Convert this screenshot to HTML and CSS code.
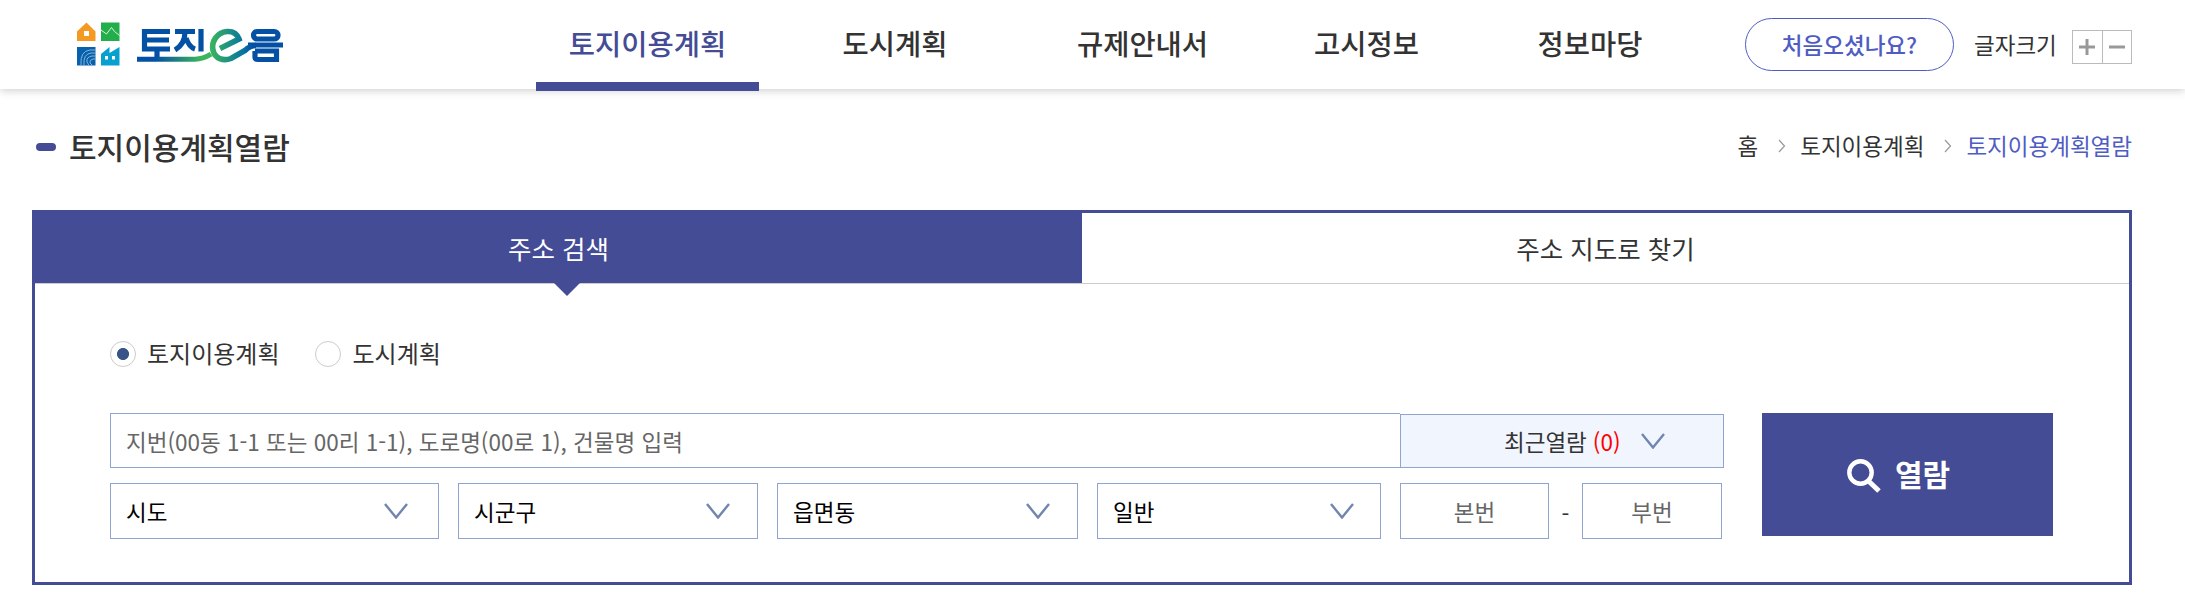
FILE: index.html
```html
<!DOCTYPE html>
<html lang="ko">
<head>
<meta charset="utf-8">
<title>토지이음</title>
<link rel="stylesheet" href="styles.css">
</head>
<body>
<header class="header">
  <a class="logo" aria-label="토지이음">
    <svg width="206" height="46" viewBox="77 21 206 46">
      <defs>
        <linearGradient id="g1" gradientUnits="userSpaceOnUse" x1="155" y1="0" x2="212" y2="0"><stop offset="0" stop-color="#0450a4"/><stop offset=".8" stop-color="#3cb55c"/><stop offset="1" stop-color="#3cb55c"/></linearGradient>
        <linearGradient id="g2" gradientUnits="userSpaceOnUse" x1="210" y1="0" x2="252" y2="0"><stop offset="0" stop-color="#3cb55c"/><stop offset=".8" stop-color="#0675a0"/><stop offset="1" stop-color="#0450a4"/></linearGradient>
      </defs>
      <path fill="#f49a22" fill-rule="evenodd" d="M77 31.500 86.500 22.500 95.500 31.500V41H77ZM84 31v5h5v-5Z"/>
      <path fill="#22ae4b" d="M101 22.500h18.500V41H101Z"/>
      <path fill="none" stroke="#d9f2dc" stroke-width="1" d="m101 30 5.500 4 5-6.500 3 4 5 4"/>
      <path fill="#0862ab" d="M77 47h18.500v18.500H77Z"/>
      <path fill="none" stroke="#8fbde0" stroke-width=".9" d="M95.500 50H90q-10 1-9 15M95.500 53H91q-8 1-7 12M95.500 56H92q-6 1-5 6l2 3.500M95.500 59H93q-4 1-3 4l2 2"/>
      <path fill="#08a0cf" fill-rule="evenodd" d="M101 65.500V54l8.500-7v6l10-6v18.500ZM105 56v3.500h3V56ZM112 56v3.500h3V56Z"/>
      <g fill="none" stroke="#0450a4" stroke-width="5.200">
        <path d="M170 31.500H144.500V49H170M145 40h24M157 49v10"/>
        <path d="M175 31.500h20M185 32q0 12-10 18M186 38q3 9 9 11M201 29v22.500"/>
        <rect x="253.500" y="31.500" width="24.500" height="7.500" rx="3.700"/>
        <path d="M248 45h35M255 51h24M255 51v6q0 2.500 3 2.500h18.500V49"/>
      </g>
      <path fill="none" stroke="url(#g1)" stroke-width="5" d="M137 59.200h58q8 0 16-5"/>
      <path fill="none" stroke="url(#g2)" stroke-width="5.600" d="m220 48.500 19-9.500q-3-8-12-7.500c-10 1-16 10-14 19 2 8 10 11 18 8l14-8q5-5 11-5"/>
    </svg>
  </a>
  <nav class="nav">
    <a class="nav-item active">토지이용계획</a>
    <a class="nav-item">도시계획</a>
    <a class="nav-item">규제안내서</a>
    <a class="nav-item">고시정보</a>
    <a class="nav-item">정보마당</a>
  </nav>
  <div class="utils">
    <a class="guide">처음오셨나요?</a>
    <span class="size-label">글자크기</span>
    <div class="size-box">
      <button class="size-btn" aria-label="확대"><svg width="16" height="16"><path d="M0 8h16M8 0v16" stroke="#999" stroke-width="3"/></svg></button>
      <button class="size-btn" aria-label="축소"><svg width="16" height="16"><path d="M0 8h16" stroke="#999" stroke-width="3"/></svg></button>
    </div>
  </div>
</header>

<div class="title-row">
  <h1 class="title">토지이용계획열람</h1>
  <div class="crumbs">
    <span>홈</span>
    <svg class="sep" width="8" height="14"><path d="m1 1 5.500 6L1 13" fill="none" stroke="#999" stroke-width="1.200"/></svg>
    <span>토지이용계획</span>
    <svg class="sep" width="8" height="14"><path d="m1 1 5.500 6L1 13" fill="none" stroke="#999" stroke-width="1.200"/></svg>
    <span class="here">토지이용계획열람</span>
  </div>
</div>

<main class="panel">
  <div class="tabs">
    <a class="tab on">주소 검색</a>
    <a class="tab">주소 지도로 찾기</a>
  </div>
  <div class="body">
    <div class="radios">
      <label class="radio checked"><i class="dot"></i><span>토지이용계획</span></label>
      <label class="radio"><i class="dot"></i><span>도시계획</span></label>
    </div>
    <div class="form">
      <div class="fields">
        <div class="line">
          <div class="field keyword">지번(00동 1-1 또는 00리 1-1), 도로명(00로 1), 건물명 입력</div>
          <div class="recent">최근열람 <span class="count">(0)</span><svg class="chev" width="24" height="16"><path d="m1 1 11 13.500L23 1"/></svg></div>
        </div>
        <div class="line selects">
          <div class="field select">시도<svg class="chev" width="24" height="16"><path d="m1 1 11 13.500L23 1"/></svg></div>
          <div class="field select">시군구<svg class="chev" width="24" height="16"><path d="m1 1 11 13.500L23 1"/></svg></div>
          <div class="field select">읍면동<svg class="chev" width="24" height="16"><path d="m1 1 11 13.500L23 1"/></svg></div>
          <div class="field select">일반<svg class="chev" width="24" height="16"><path d="m1 1 11 13.500L23 1"/></svg></div>
          <div class="field num">본번</div>
          <span class="dash">-</span>
          <div class="field num">부번</div>
        </div>
      </div>
      <button class="submit"><svg width="34" height="34" fill="none" stroke="#fff"><circle cx="13.500" cy="13.500" r="11.200" stroke-width="4.400"/><path d="m21.500 22 10.500 10" stroke-width="5"/></svg><span>열람</span></button>
    </div>
  </div>
</main>
</body>
</html>
```
FILE: styles.css
```css
* { box-sizing: border-box; }
body {
  margin: 0;
  height: 615px;
  overflow: hidden;
  background: #fff;
  color: #333;
  font-family: "Noto Sans CJK KR", sans-serif;
  font-size: 22.5px;
  line-height: 1;
}
svg { display: block; flex: none; }
button { margin: 0; padding: 0; border: 0; font: inherit; }

.header {
  display: flex;
  height: 89px;
  padding: 0 53px 0 77px;
  box-shadow: 0 1px 9px rgba(0, 0, 0, .22);
}
.logo { padding-top: 21px; width: 459px; }
.nav { display: flex; height: 91px; font-size: 28.5px; font-weight: 500; }
.nav-item { width: 223px; padding-top: 29px; text-align: center; white-space: nowrap; }
.nav-item:nth-child(2) { width: 272px; }
.nav-item:nth-child(3) { width: 223px; }
.nav-item:nth-child(4) { width: 225px; }
.nav-item:nth-child(5) { width: 222px; }
.nav-item.active { color: #434c94; border-bottom: 9px solid #434c94; }
.utils { display: flex; margin-left: auto; }
.guide {
  width: 209px;
  height: 53px;
  margin: 18px 20px 0 0;
  padding-top: 14px;
  border: 1px solid #4f5cc4;
  border-radius: 27px;
  color: #4f5cc4;
  font-weight: 500;
  text-align: center;
}
.size-label { width: 83px; padding-top: 33px; white-space: nowrap; }
.size-box { display: flex; margin: 30px 0 0 15px; width: 60px; height: 34px; border: 1px solid #bbb; }
.size-btn { flex: 1; display: flex; align-items: center; justify-content: center; background: #fff; }
.size-btn + .size-btn { border-left: 1px solid #bbb; }

.title-row { display: flex; justify-content: space-between; height: 121px; padding: 0 53px 0 36px; }
.title { display: flex; margin: 0; padding-top: 42px; font-size: 30px; font-weight: 500; }
.title::before { content: ""; width: 20px; height: 8px; margin: 12px 13px 0 0; border-radius: 4px; background: #434c94; }
.crumbs { display: flex; padding-top: 45px; }
.sep { margin: 5px 14px 0 20px; }
.here { color: #4f5cc4; }

.panel { width: 2100px; height: 375px; margin-left: 32px; border: 3px solid #434c94; }
.tabs { display: flex; height: 71px; border-bottom: 1px solid #ccc; font-size: 25.5px; }
.tab { width: 1047px; padding-top: 22px; text-align: center; }
.tab.on { position: relative; background: #434c94; color: #fff; }
.tab.on::after {
  content: "";
  position: absolute;
  left: 519px;
  top: 70px;
  border: solid transparent;
  border-width: 13px 13px 0;
  border-top-color: #434c94;
}
.body { padding: 57px 76px 0 75px; }
.radios { display: flex; gap: 36px; height: 72px; font-size: 24px; }
.radio { display: flex; align-items: center; height: 26px; }
.radio span { padding-bottom: 2px; }
.dot { width: 26px; height: 26px; margin-right: 11px; border: 1px solid #ccc; border-radius: 50%; }
.checked .dot { background: radial-gradient(circle, #375488 5.600px, transparent 6.400px); }
.form { display: flex; justify-content: space-between; }
.line { display: flex; align-items: flex-end; }
.field { display: flex; align-items: center; border: 1px solid #8fa5d0; height: 56px; padding-left: 15px; }
.keyword { width: 1290px; height: 55px; padding-top: 1px; border-right: 0; color: #666; }
.recent {
  display: flex;
  align-items: center;
  width: 324px;
  height: 54px;
  padding-left: 103px;
  border: 1px solid #8fa5d0;
  background: #f1f6fe;
}
.count { margin-left: 6px; color: #f00; }
.recent .chev { margin-left: 20px; }
.chev path { fill: none; stroke: #7186ae; stroke-width: 2.400px; }
.selects { margin-top: 15px; }
.select { justify-content: space-between; padding-right: 29px; margin-right: 19px; width: 301px; color: #000; }
.select:nth-child(1) { width: 329px; padding-right: 30px; }
.select:nth-child(2) { width: 300px; padding-right: 27px; }
.select:nth-child(3) { padding-right: 27px; }
.select:nth-child(4) { width: 284px; padding-right: 26px; }
.num { width: 149px; padding: 0; justify-content: center; color: #666; }
.dash { width: 33px; height: 56px; line-height: 60px; text-align: center; }
.dash + .num { width: 140px; }
.submit {
  display: flex;
  align-items: center;
  gap: 14px;
  width: 291px;
  height: 123px;
  padding: 3px 0 0 85px;
  background: #434c94;
  color: #fff;
  font-size: 30px;
  font-weight: 700;
}
.submit span { padding-bottom: 6px; }
```
